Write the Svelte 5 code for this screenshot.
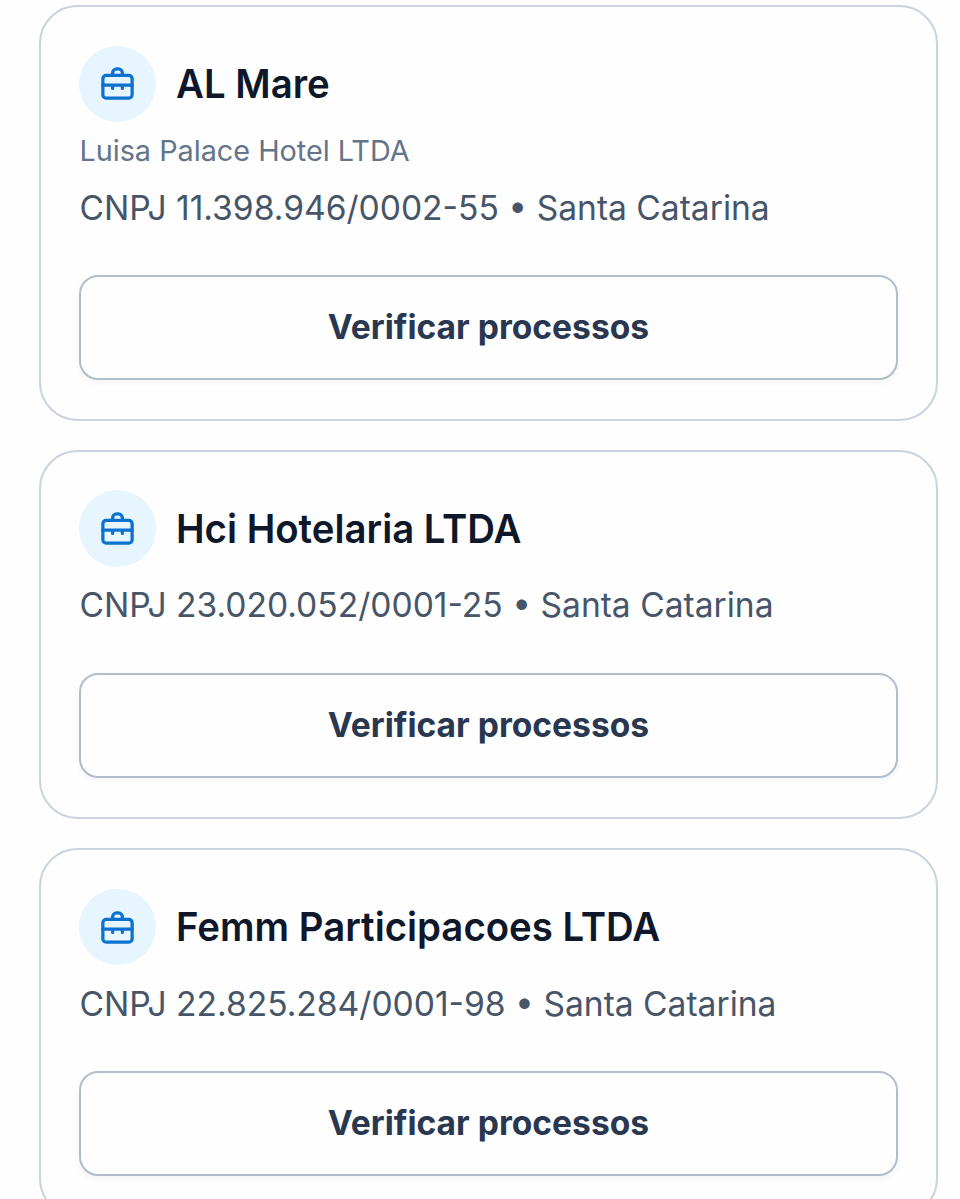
<script>
  const companies = [
    { name: 'AL Mare', legal: 'Luisa Palace Hotel LTDA', cnpj: '11.398.946/0002-55', state: 'Santa Catarina' },
    { name: 'Hci Hotelaria LTDA', cnpj: '23.020.052/0001-25', state: 'Santa Catarina' },
    { name: 'Femm Participacoes LTDA', cnpj: '22.825.284/0001-98', state: 'Santa Catarina' }
  ];
</script>

<main class="list">
  {#each companies as company}
    <article class="card">
      <header class="head">
        <span class="badge">
          <svg viewBox="0 0 24 24" aria-hidden="true">
            <rect x="3" y="7" width="18" height="14" rx="2" />
            <path d="M9 7V5.5a2.5 2.5 0 0 1 2.5-2.5h1a2.5 2.5 0 0 1 2.5 2.5V7M3 13h18M9 13v2M15 13v2" />
          </svg>
        </span>
        <h2>{company.name}</h2>
      </header>
      {#if company.legal}
        <p class="legal">{company.legal}</p>
      {/if}
      <p class="meta">CNPJ {company.cnpj} • {company.state}</p>
      <button type="button">Verificar processos</button>
    </article>
  {/each}
</main>

<style>
  :global(body) {
    margin: 0;
    background: #fefefe;
    overflow: hidden;
  }
  .list {
    box-sizing: border-box;
    height: 1199px;
    overflow: hidden;
    padding: 5px 21.8px 0 38.7px;
    display: flex;
    flex-direction: column;
    gap: 29px;
    font-family: Inter, sans-serif;
  }
  .card {
    flex: none;
    box-sizing: border-box;
    display: flex;
    flex-direction: column;
    padding: 38.6px 38.6px 39.1px;
    border: 2px solid #cbd3df;
    border-radius: 38.4px;
    background: #fefefe;
  }
  .head {
    display: flex;
    align-items: center;
    gap: 20px;
  }
  .badge {
    flex: none;
    width: 76.8px;
    height: 76.8px;
    border-radius: 50%;
    background: #e6f5fe;
    display: flex;
    align-items: center;
    justify-content: center;
  }
  svg {
    width: 39px;
    height: 39px;
    fill: none;
    stroke: #0c72d0;
    stroke-width: 2;
    stroke-linecap: round;
    stroke-linejoin: round;
  }
  h2 {
    margin: 0;
    font-size: 40px;
    line-height: 48px;
    font-weight: 600;
    transform: scaleX(0.959);
    transform-origin: left center;
    color: #0f172a;
    white-space: nowrap;
  }
  p {
    margin: 0 0 0 0.1px;
    white-space: nowrap;
  }
  .legal {
    margin-top: 9.6px;
    font-size: 28.8px;
    line-height: 38.4px;
    color: #64748b;
  }
  .meta {
    margin-top: 14.2px;
    font-size: 33.6px;
    line-height: 48px;
    color: #475569;
  }
  .legal + .meta {
    margin-top: 13.3px;
  }
  button {
    box-sizing: border-box;
    height: 105.2px;
    margin-top: 43.3px;
    border: 2px solid #b0bdcb;
    border-radius: 19.2px;
    background: #fefefe;
    box-shadow: 0 2.4px 6px rgba(15, 23, 42, 0.04);
    font: 700 33.6px/48px Inter, sans-serif;
    color: #293850;
  }
  .legal ~ button {
    margin-top: 42.9px;
  }
</style>
